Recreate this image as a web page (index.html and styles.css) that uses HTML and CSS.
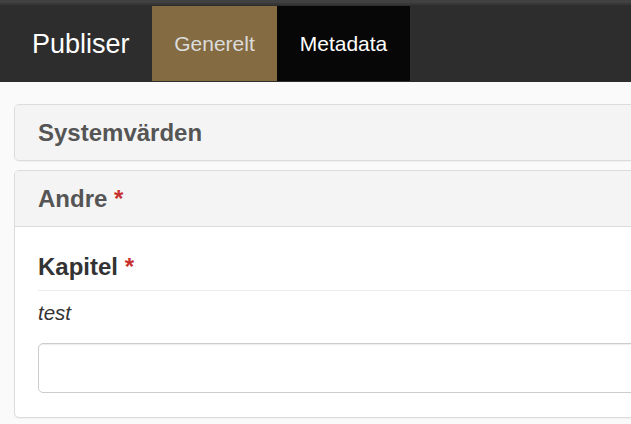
FILE: index.html
```html
<!DOCTYPE html>
<html>
<head>
<meta charset="utf-8">
<link rel="stylesheet" href="styles.css">
</head>
<body>
<div class="topstrip"></div>
<nav class="navbar">
  <div class="brand">Publiser</div>
  <div class="tab tab-active">Generelt</div>
  <div class="tab tab-dark">Metadata</div>
</nav>
<main class="content">
  <section class="panel">
    <div class="panel-heading">Systemvärden</div>
  </section>
  <section class="panel">
    <div class="panel-heading">Andre <span class="req">*</span></div>
    <div class="panel-body">
      <div class="field-label">Kapitel <span class="req">*</span></div>
      <div class="field-help">test</div>
      <div class="field-input"></div>
    </div>
  </section>
</main>
</body>
</html>
```
FILE: styles.css
```css
html, body {
  margin: 0;
  padding: 0;
  overflow: hidden;
  background: #fafafa;
  font-family: "Liberation Sans", Arial, sans-serif;
}
.topstrip {
  height: 3px;
  background: #414141;
  border-bottom: 2px solid #373737;
}
.navbar {
  display: flex;
  align-items: stretch;
  height: 77px;
  background: #2d2d2d;
}
.brand {
  width: 152px;
  padding-left: 32px;
  font-size: 27px;
  color: #fff;
  line-height: 77px;
  padding-top: 1px;
  box-sizing: border-box;
  white-space: nowrap;
}
.tab {
  margin: 1px 0;
  font-size: 21px;
  line-height: 75px;
  text-align: center;
  padding-bottom: 4px;
  box-sizing: border-box;
}
.tab-active {
  width: 125px;
  background: #846b42;
  color: #dcdcdc;
}
.tab-dark {
  width: 133px;
  background: #070707;
  color: #fff;
}
.content {
  padding: 22px 0 0 14px;
}
.panel {
  width: 680px;
  border: 1px solid #dcdcdc;
  border-radius: 5px;
  background: #fff;
  margin-bottom: 9px;
  overflow: hidden;
  box-shadow: 0 1px 1px rgba(0,0,0,0.04);
}
.panel-heading {
  height: 55px;
  line-height: 55px;
  padding-left: 23px;
  background: #f4f4f4;
  color: #555;
  font-size: 24px;
  font-weight: bold;
}
.panel + .panel .panel-heading {
  border-bottom: 1px solid #dcdcdc;
}
.req {
  color: #c7312d;
}
.panel-body {
  padding: 25px 0 24px 23px;
}
.field-label {
  font-size: 24px;
  font-weight: bold;
  color: #333;
  line-height: 30px;
  padding-bottom: 8px;
  border-bottom: 1px solid #ececec;
}
.field-help {
  font-style: italic;
  font-size: 20.5px;
  color: #333;
  margin-top: 8px;
  line-height: 28px;
}
.field-input {
  margin-top: 16px;
  height: 48px;
  border: 1px solid #cccccc;
  border-radius: 5px;
  background: #fff;
  box-shadow: inset 0 1px 1px rgba(0,0,0,0.075);
}
```
